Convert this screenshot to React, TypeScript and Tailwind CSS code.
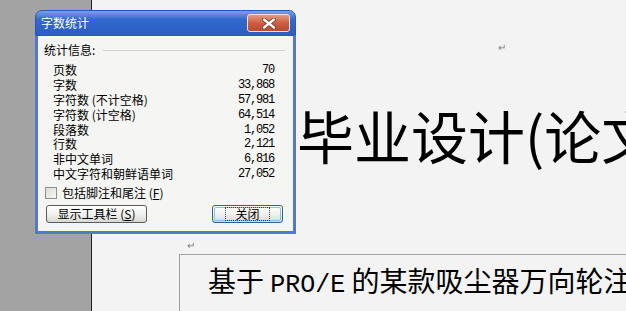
import React from "react";

const stats = [
  { label: "页数", value: "70" },
  { label: "字数", value: "33,868" },
  { label: "字符数 (不计空格)", value: "57,981" },
  { label: "字符数 (计空格)", value: "64,514" },
  { label: "段落数", value: "1,052" },
  { label: "行数", value: "2,121" },
  { label: "非中文单词", value: "6,816" },
  { label: "中文字符和朝鲜语单词", value: "27,052" },
];

const cjk = "font-['Noto_Sans_CJK_SC','Noto_Sans',sans-serif]";

function Ret({ className }: { className: string }) {
  return <span className={`text-[10px] leading-[10px] text-[#808080] ${className}`}>↵</span>;
}

function WordCountDialog() {
  return (
    <div className={`absolute left-[35px] top-[10px] w-[261px] h-[224px] flex flex-col ${cjk}`}>
      <div className="h-[26px] rounded-t-[7px] bg-linear-to-b from-[#7aa2ea] via-[#3468cc] via-35% to-[#2b5dc2] flex items-center pl-[5px] pr-[5px] border border-[#2a56b4]">
        <span className="text-[12px] text-white">字数统计</span>
        <div className="ml-auto w-[43px] h-[18px] rounded-[3px] border border-[#f2e0d8] bg-linear-to-b from-[#e39a82] via-[#cc5f40] to-[#b84a2e] flex items-center justify-center">
          <svg width="14" height="11" viewBox="0 0 14 11">
            <path d="M2 1.5 L12 9.5 M12 1.5 L2 9.5" stroke="#7a3020" strokeWidth="4" strokeLinecap="round" />
            <path d="M2 1.5 L12 9.5 M12 1.5 L2 9.5" stroke="#ffffff" strokeWidth="2.4" strokeLinecap="round" />
          </svg>
        </div>
      </div>
      <div className="flex-1 bg-[#f5f5f3] border-x-[3px] border-b-[3px] border-[#5479c8] flex flex-col pl-[6px] pr-[8px] pt-[7px]">
        <div className="flex items-center gap-[8px]">
          <span className="text-[12px] leading-[14px] text-black">统计信息:</span>
          <div className="flex-1 h-px bg-[#d4d4d0]" />
        </div>
        <div className="flex flex-col pl-[9px] pr-[11px] mt-[6px]">
          {stats.map((s) => (
            <div key={s.label} className="flex justify-between items-center h-[14.8px]">
              <span className="text-[12px] leading-[14px] text-black whitespace-nowrap">{s.label}</span>
              <span className="text-[12px] leading-[14px] text-black font-['Liberation_Mono',monospace] tracking-[-1.2px]">
                {s.value}
              </span>
            </div>
          ))}
        </div>
        <div className="flex items-center gap-[5px] mt-[5px] pl-[1px]">
          <div className="w-[12px] h-[12px] border border-[#8e8f8f] bg-linear-to-br from-[#dcdcd8] to-[#f6f6f4]" />
          <span className="text-[12px] leading-[14px] text-black">
            包括脚注和尾注 (<span className="underline">F</span>)
          </span>
        </div>
        <div className="flex justify-between mt-[5px] pl-[2px] pr-[2px]">
          <div className="w-[101px] h-[18px] rounded-[3px] border border-[#5a5a5a] bg-linear-to-b from-[#ffffff] via-[#f1f1ef] to-[#d8d8d4] flex items-center justify-center">
            <span className="text-[12px] leading-[14px] text-black">
              显示工具栏 (<span className="underline">S</span>)
            </span>
          </div>
          <div className="w-[71px] h-[18px] rounded-[3px] border border-[#3c5c8c] bg-linear-to-b from-[#ffffff] via-[#f1f1ef] to-[#d8d8d4] p-[1px]">
            <div className="w-full h-full rounded-[2px] border border-[#8cc0e6] flex items-center justify-center">
              <span className="text-[12px] leading-[12px] text-black outline-1 outline-dotted outline-[#444] px-[9px]">关闭</span>
            </div>
          </div>
        </div>
      </div>
    </div>
  );
}

export default function App() {
  return (
    <div className="relative w-[626px] h-[311px] overflow-hidden flex bg-[#f3f3f3]">
      <div className="w-[91px] shrink-0 bg-[#a3a3a3]" />
      <div className="w-px shrink-0 bg-[#222]" />
      <div className={`flex-1 min-w-0 flex flex-col ${cjk} text-black`}>
        <Ret className="ml-[406px] mt-[42px]" />
        <div className="ml-[205px] mt-[47px] text-[57px] leading-[70px] whitespace-nowrap">毕业设计(论文)</div>
        <Ret className="ml-[95px] mt-[71px]" />
        <div className="ml-[87px] mt-[4px] flex-1 border-l border-t border-[#a0a0a0] pl-[28px] pt-[8px]">
          <div className="text-[28px] leading-[34px] whitespace-nowrap">
            基于 <span className="font-['Liberation_Mono',monospace] text-[25px]">PRO/E</span> 的某款吸尘器万向轮注塑模具设计
          </div>
        </div>
      </div>
      <WordCountDialog />
    </div>
  );
}
